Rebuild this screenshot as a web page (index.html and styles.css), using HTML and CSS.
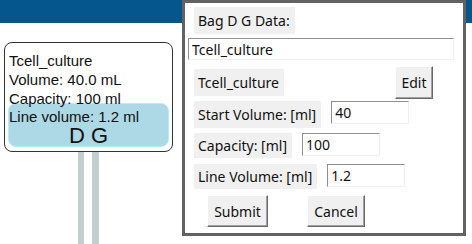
FILE: index.html
```html
<!DOCTYPE html>
<html lang="en">
<head>
    <meta charset="UTF-8">
    <title>Bag D G</title>
    <link rel="stylesheet" href="styles.css">
</head>
<body>

<div class="topbar"></div>

<div class="canvas">
    <div class="bag">
        <div class="bag-line">Tcell_culture</div>
        <div class="bag-line">Volume: 40.0 mL</div>
        <div class="bag-line">Capacity: 100 ml</div>
        <div class="bag-fill">
            <div class="bag-line">Line volume: 1.2 ml</div>
            <div class="bag-id">D G</div>
        </div>
    </div>
    <div class="tubes">
        <span class="tube"></span>
        <span class="tube"></span>
    </div>
</div>

<!-- popup window for editing the bag -->
<div class="dialog">
    <div class="row title-row">
        <span class="label">Bag D G Data:</span>
    </div>
    <input class="entry name-entry" type="text" value="Tcell_culture">
    <div class="row name-row">
        <span class="label">Tcell_culture</span>
        <button class="btn edit-btn">Edit</button>
    </div>
    <div class="row field-row start-row">
        <span class="label">Start Volume: [ml]</span>
        <input class="entry" type="text" value="40">
    </div>
    <div class="row field-row cap-row">
        <span class="label short">Capacity: [ml]</span>
        <input class="entry" type="text" value="100">
    </div>
    <div class="row field-row line-row">
        <span class="label short">Line Volume: [ml]</span>
        <input class="entry" type="text" value="1.2">
    </div>
    <div class="row button-row">
        <button class="btn submit-btn">Submit</button>
        <button class="btn cancel-btn">Cancel</button>
    </div>
</div>

</body>
</html>
```

FILE: styles.css
```css
body {
    margin: 0;
    width: 472px;
    height: 244px;
    overflow: hidden;
    background-color: white;
    font-family: "Liberation Sans", Arial, sans-serif;
    position: relative;
}
.topbar {
    height: 23px;
    background-color: #04568c;
}
.canvas {
    padding-left: 4px;
    padding-top: 19px;
}
.bag {
    width: 167px;
    height: 100px;
    border: 1px solid #333;
    border-radius: 8px;
    padding-top: 8px;
    color: #111;
    font-size: 15px;
}
.bag-line {
    line-height: 19px;
    padding-left: 4px;
    white-space: nowrap;
}
.bag-fill {
    box-sizing: border-box;
    margin: -5px 3px 0 3px;
    height: 44px;
    padding-top: 3px;
    background-color: #add8e6;
    border: 1px solid #b4eef6;
    border-radius: 8px;
}
.bag-fill .bag-line {
    padding-left: 0;
}
.bag-id {
    font-size: 22px;
    line-height: 19px;
    text-align: center;
}
.tubes {
    display: flex;
    gap: 8px;
    margin-left: 74px;
}
.tube {
    width: 6px;
    height: 92px;
    background-color: #c2cfcf;
}
.tube + .tube {
    width: 7px;
}

.dialog {
    position: absolute;
    left: 182px;
    top: 0;
    width: 278px;
    height: 230px;
    border: 3px solid #626262;
    background-color: white;
    font-family: "Noto Sans", sans-serif;
    font-size: 14px;
    color: #111;
}
.row {
    display: flex;
    align-items: flex-start;
}
.label {
    background-color: #f0f0f0;
    height: 27px;
    line-height: 27px;
    padding: 0 5px 0 4px;
    margin-left: 9px;
    white-space: nowrap;
}
.label.short {
    height: 25px;
    line-height: 25px;
}
.title-row {
    margin-top: 4px;
}
.entry {
    font-family: "Noto Sans", sans-serif;
    font-size: 14px;
    color: #111;
    width: 78px;
    height: 23px;
    box-sizing: border-box;
    padding: 0 3px;
    margin: 0 0 0 10px;
    border: 1px solid #f0f0f0;
    border-top-color: #8f8f8f;
    border-left-color: #8f8f8f;
    outline: none;
}
.name-entry {
    display: block;
    width: 266px;
    height: 22px;
    margin: 4px 0 0 3px;
}
.name-row {
    margin-top: 6px;
    align-items: center;
}
.btn {
    font-family: "Noto Sans", sans-serif;
    font-size: 14px;
    color: #111;
    background-color: #f0f0f0;
    border: 1px solid;
    border-color: #fff #6a6a6a #6a6a6a #fff;
    box-shadow: inset -1px -1px #a0a0a0;
    padding: 0;
}
.edit-btn {
    width: 38px;
    height: 33px;
    margin-left: auto;
    margin-right: 30px;
}
.start-row {
    margin-top: 2px;
}
.cap-row {
    margin-top: 5px;
}
.line-row {
    margin-top: 6px;
}
.button-row {
    margin-top: 6px;
    gap: 39px;
}
.submit-btn {
    width: 61px;
    height: 32px;
    margin-left: 22px;
}
.cancel-btn {
    width: 58px;
    height: 32px;
}
```
